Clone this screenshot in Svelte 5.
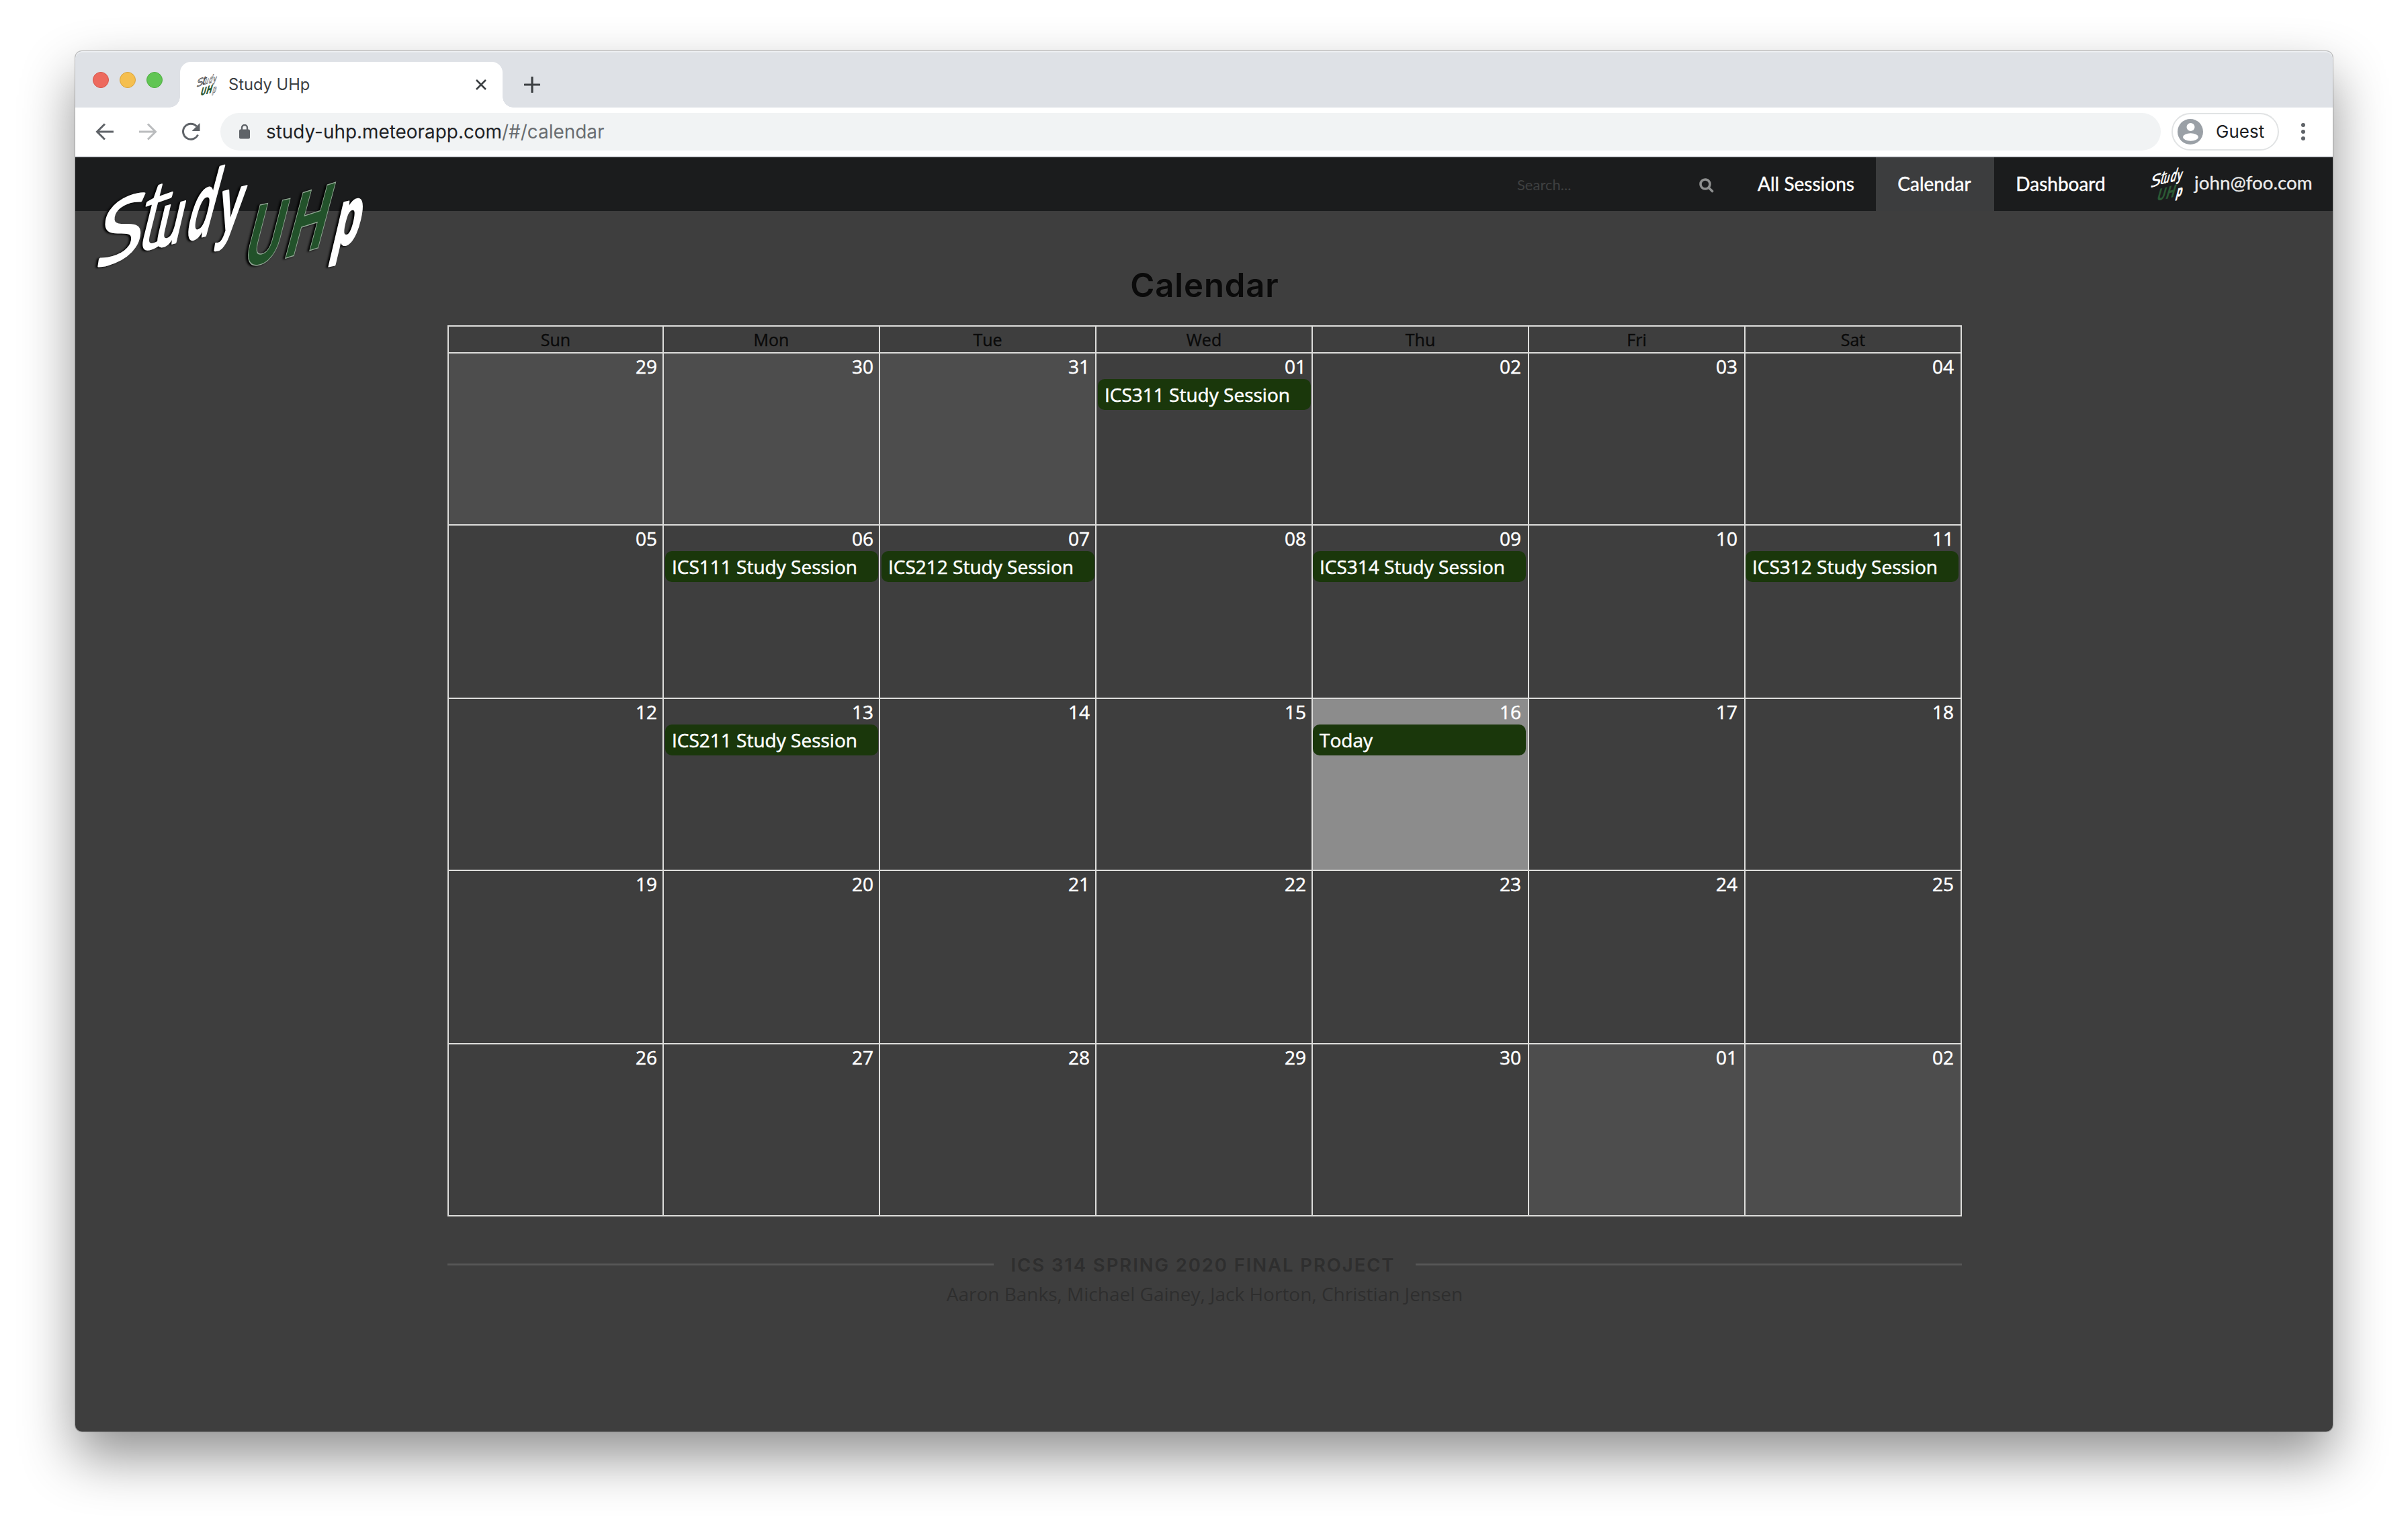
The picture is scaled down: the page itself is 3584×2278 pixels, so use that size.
<script>
  const weekdays = ['Sun', 'Mon', 'Tue', 'Wed', 'Thu', 'Fri', 'Sat'];
  const events = {
    3: 'ICS311 Study Session',
    8: 'ICS111 Study Session',
    9: 'ICS212 Study Session',
    11: 'ICS314 Study Session',
    13: 'ICS312 Study Session',
    15: 'ICS211 Study Session',
    18: 'Today'
  };
  const today = 18;
  const days = Array.from({ length: 35 }, (_, i) => {
    const n = i < 3 ? 29 + i : i < 33 ? i - 2 : i - 32;
    return {
      label: String(n).padStart(2, '0'),
      outside: i < 3 || i > 32,
      late: i % 7 > 3,
      today: i === today,
      event: events[i]
    };
  });

  // Each wordmark letter has its own slant and stretch.
  const study = [
    { ch: 'S', w: 400, m: 'matrix(3.8 -1.5 -0.6 3.9 30 514)' },
    { ch: 't', w: 300, m: 'matrix(3.7 -1.3 -1.1 4.4 206 444)' },
    { ch: 'u', w: 600, m: 'matrix(1.9 -0.5 -0.8 3.4 290 420)' },
    { ch: 'd', w: 600, m: 'matrix(1.9 -0.5 -1.1 4.1 427 388)' },
    { ch: 'y', w: 600, m: 'matrix(2 -0.5 -0.55 3.4 576 350)' }
  ];
  const uh = [
    { ch: 'U', w: 700, m: 'matrix(2.3 -0.5 -1 3.9 680 508)' },
    { ch: 'H', w: 700, m: 'matrix(2.5 -0.8 -1.1 4.1 862 470)' }
  ];
  const p = [{ ch: 'p', w: 700, m: 'matrix(1.9 -0.4 -0.85 3.6 1084 415)' }];
</script>

{#snippet letters(list)}
  {#each list as l}
    <text transform={l.m} font-weight={l.w}>{l.ch}</text>
  {/each}
{/snippet}

{#snippet stacked(kind)}
  <svg class="mark {kind}" viewBox="40 40 680 780" preserveAspectRatio="none">
    <g class="white">{@render letters(study)}</g>
    <g transform="translate(-530 310)">
      <g class="green">{@render letters(uh)}</g>
      <g class="white">{@render letters(p)}</g>
    </g>
  </svg>
{/snippet}

<div class="desktop">
  <div class="window">
    <div class="tabstrip">
      <div class="lights"><i class="red"></i><i class="yellow"></i><i class="lime"></i></div>
      <div class="tab">
        {@render stacked('favicon')}
        <span class="tab-title">Study UHp</span>
        <svg class="close" viewBox="0 0 16 16"><path d="M1 1l14 14M15 1l-14 14" /></svg>
      </div>
      <svg class="plus" viewBox="0 0 24 24"><path d="M12 1v22M1 12h22" /></svg>
    </div>

    <div class="toolbar">
      <svg class="nav-icon" viewBox="0 0 28 28"><path d="M27 14H3M14 2.500L2.500 14L14 25.500" /></svg>
      <svg class="nav-icon faded" viewBox="0 0 28 28"><path d="M1 14h24M14 2.500L25.500 14L14 25.500" /></svg>
      <svg class="nav-icon" viewBox="0 0 28 28">
        <path d="M24.500 18.500A11.500 11.500 0 1 1 22.500 6" />
        <path class="solid" d="M27.500 1v12h-12z" />
      </svg>
      <div class="omnibox">
        <svg class="lock" viewBox="0 0 16 22">
          <rect x="0" y="7.500" width="16" height="14" rx="2" />
          <path d="M4 8V5a4 4 0 0 1 8 0v3" />
        </svg>
        <span class="host">study-uhp.meteorapp.com</span><span class="path">/#/calendar</span>
      </div>
      <div class="guest">
        <svg class="avatar" viewBox="0 0 38 38">
          <circle cx="19" cy="19" r="19" />
          <circle class="cut" cx="19.500" cy="12" r="6" />
          <ellipse class="cut" cx="19.500" cy="27" rx="11.500" ry="5.700" />
        </svg>
        <span>Guest</span>
      </div>
      <svg class="dots" viewBox="0 0 6 26"><circle cx="3" cy="3" r="3" /><circle cx="3" cy="13" r="3" /><circle cx="3" cy="23" r="3" /></svg>
    </div>

    <nav class="navbar">
      <svg class="logo" viewBox="0 0 1290 570">
        <g class="white">{@render letters(study)}</g>
        <g class="green">{@render letters(uh)}</g>
        <g class="white">{@render letters(p)}</g>
      </svg>
      <div class="search">
        <span>Search...</span>
        <svg viewBox="0 0 22 22"><circle cx="9" cy="9" r="7" /><path d="M14 14l6.500 6.500" /></svg>
      </div>
      <span class="item sessions">All Sessions</span>
      <span class="item active">Calendar</span>
      <span class="item dashboard">Dashboard</span>
      <div class="user">
        {@render stacked('small')}
        <span>john@foo.com</span>
      </div>
    </nav>

    <main>
      <h1>Calendar</h1>
      <div class="calendar">
        <div class="weekdays">
          {#each weekdays as d}<div class="weekday">{d}</div>{/each}
        </div>
        <div class="days">
          {#each days as d}
            <div class="day" class:outside={d.outside} class:late={d.late} class:today={d.today}>
              <div class="date">{d.label}</div>
              {#if d.event}<div class="event">{d.event}</div>{/if}
            </div>
          {/each}
        </div>
      </div>
      <footer>
        <h2>ICS 314 SPRING 2020 FINAL PROJECT</h2>
        <p>Aaron Banks, Michael Gainey, Jack Horton, Christian Jensen</p>
      </footer>
    </main>
  </div>
</div>

<style>
  :global(body) { background: #fff; }
  .desktop { box-sizing: border-box; height: 2278px; padding: 76px 112px 148px; overflow: hidden; }
  .window {
    height: 2054px; border-radius: 10px; background: #3e3e3e; display: flex; flex-direction: column;
    box-shadow: 0 0 0 1px rgba(0, 0, 0, 0.22), 0 38px 80px rgba(0, 0, 0, 0.43);
    font-family: 'Inter', sans-serif;
  }
  svg { display: block; flex: none; }

  .tabstrip {
    height: 84px; box-sizing: border-box; background: #dee1e6; border-radius: 10px 10px 0 0;
    box-shadow: inset 0 2px 0 #eceef1; display: flex; align-items: flex-end; padding-left: 26px;
  }
  .lights { display: flex; gap: 16px; width: 130px; margin-bottom: 29px; }
  .lights i { box-sizing: border-box; width: 24px; height: 24px; border-radius: 50%; border: 1px solid; }
  .lights .red { background: #ed6a5e; border-color: #d6554a; }
  .lights .yellow { background: #f5bf4f; border-color: #d9a33c; }
  .lights .lime { background: #61c554; border-color: #4fae41; }
  .tab {
    position: relative; width: 480px; height: 68px; box-sizing: border-box; background: #fff;
    border-radius: 16px 16px 0 0; display: flex; align-items: center; padding: 0 24px 0 25px;
  }
  .tab::before, .tab::after { content: ''; position: absolute; bottom: 0; width: 16px; height: 16px; }
  .tab::before { left: -16px; background: radial-gradient(circle at 0 0, transparent 15.5px, #fff 16px); }
  .tab::after { right: -16px; background: radial-gradient(circle at 100% 0, transparent 15.5px, #fff 16px); }
  .tab-title { margin-left: 17px; font-size: 23.7px; line-height: 68px; color: #3c4043; }
  .close { width: 16px; height: 16px; margin-left: auto; fill: none; stroke: #3c4043; stroke-width: 2.6; }
  .plus { width: 24px; height: 24px; margin: 0 0 22px 32px; fill: none; stroke: #3c4043; stroke-width: 3.2; stroke-linecap: round; }

  .toolbar {
    height: 74px; box-sizing: border-box; background: #fff; border-bottom: 2px solid #dadce0;
    display: flex; align-items: center; padding-left: 30px;
  }
  .nav-icon { width: 28px; height: 28px; margin-right: 36px; fill: none; stroke: #5f6368; stroke-width: 3; }
  .nav-icon .solid { fill: #5f6368; stroke: none; }
  .faded { stroke: #babcbe; }
  .omnibox {
    width: 2888px; height: 56px; margin-left: -6px; box-sizing: border-box; border-radius: 28px; background: #f1f3f4;
    display: flex; align-items: center; padding-left: 28px; font-size: 27.9px; line-height: 56px;
  }
  .lock { width: 16px; height: 22px; margin-right: 24px; fill: #5f6368; }
  .lock path { fill: none; stroke: #5f6368; stroke-width: 2.4; }
  .host { color: #202124; }
  .path { color: #696d71; }
  .guest {
    width: 160px; height: 56px; margin-left: 16px; box-sizing: border-box; border: 2px solid #e1e3e4; border-radius: 28px;
    display: flex; align-items: center; padding-left: 7px; font-size: 26px; line-height: 52px; color: #202124;
  }
  .avatar { width: 38px; height: 38px; margin-right: 19px; fill: #9aa0a6; }
  .avatar .cut { fill: #fff; }
  .dots { width: 6px; height: 26px; margin-left: 33px; fill: #5f6368; }

  .navbar {
    position: relative; height: 80px; background: #1b1c1d; display: flex; align-items: stretch; justify-content: flex-end;
    font-family: 'Lato', sans-serif; font-size: 28px; line-height: 80px; color: #fff;
  }
  .mark, .logo { overflow: visible; font: 100px 'Open Sans', sans-serif; }
  .white { fill: #fff; stroke: #fff; stroke-width: 2.5; stroke-linejoin: round; }
  .green { fill: #22522a; }
  .logo { position: absolute; left: 18px; top: -4px; width: 430px; height: 190px; z-index: 1; filter: drop-shadow(-3px 1px 1.5px #000); }
  .logo .green { stroke: #93a896; stroke-width: 1.2; }
  .search {
    width: 327px; box-sizing: border-box; padding-right: 33px; display: flex; align-items: center;
    justify-content: space-between; font-size: 22px; line-height: 84px; color: #3f4041;
  }
  .search span { padding: 2px 0 0 1px; }
  .search svg { width: 22px; height: 22px; margin-top: 3px; fill: none; stroke: #8f9090; stroke-width: 3.6; }
  .item { width: 176px; box-sizing: border-box; padding-right: 2px; text-align: center; line-height: 79px; -webkit-text-stroke: 0.4px currentColor; }
  .sessions { width: 208px; padding-right: 0; }
  .dashboard { width: 200px; }
  .active { background: #3c3d3e; }
  .user { width: 304px; box-sizing: border-box; padding: 0 0 4px 33px; display: flex; align-items: center; line-height: 76px; color: #ececec; font-size: 27.8px; -webkit-text-stroke: 0.3px currentColor; }
  .small { width: 49px; height: 50px; margin: 4px 16px 0 0; }
  .small .green { fill: #2c5a35; stroke: #2c5a35; stroke-width: 1.5; }
  .favicon { width: 30px; height: 32px; }
  .favicon .white { stroke: #444; stroke-width: 5; }
  .favicon .green { stroke: #22522a; stroke-width: 4; }

  main { width: 2254px; margin-left: 554px; padding-top: 79px; font-family: 'Open Sans', sans-serif; }
  h1 { margin: 0 0 27px; font: 600 49px/64px 'Inter', sans-serif; letter-spacing: 0.9px; text-align: center; color: #0a0a0a; }
  .calendar { border: solid #dededc; border-width: 2px 2px 2px 0; }
  .weekdays, .days { display: grid; grid-template-columns: 320px repeat(6, 322px); }
  .weekday {
    box-sizing: border-box; border-left: 2px solid #dededc; height: 38px; text-align: center;
    font-size: 25px; line-height: 38px; color: #0a0a0a; -webkit-text-stroke: 0.4px currentColor;
  }
  .days { grid-template-rows: 256px 258px 256px 258px 256px; }
  .day { box-sizing: border-box; border-left: 2px solid #dededc; border-top: 2px solid #dededc; }
  .outside { background: #4d4d4d; background-clip: padding-box; }
  .today { background: #8c8c8c; background-clip: padding-box; }
  .date { height: 38px; padding-right: 8px; text-align: right; font-size: 28px; line-height: 38px; color: #fff; -webkit-text-stroke: 0.5px currentColor; }
  .event {
    height: 46px; margin: 0 1px 0 2px; padding-left: 10px; border-radius: 10px; background: #1a370b; color: #fff;
    font-size: 28px; line-height: 46px; white-space: nowrap; -webkit-text-stroke: 0.5px currentColor;
  }
  .late .date { padding-right: 10px; }
  .late .event { margin: 0 3px 0 0; }

  footer { margin-top: 50px; text-align: center; color: #2e2e2e; }
  h2 { display: flex; align-items: center; margin: 0; font: 600 27.5px/44px 'Inter', sans-serif; letter-spacing: 1.9px; white-space: nowrap; }
  h2::before, h2::after { content: ''; flex: 1; height: 4px; background: linear-gradient(#575757 50%, #484848 50%); }
  h2::before { margin-right: 26px; }
  h2::after { margin-left: 31px; }
  p { margin: 0; font-size: 28px; line-height: 43px; }
</style>
